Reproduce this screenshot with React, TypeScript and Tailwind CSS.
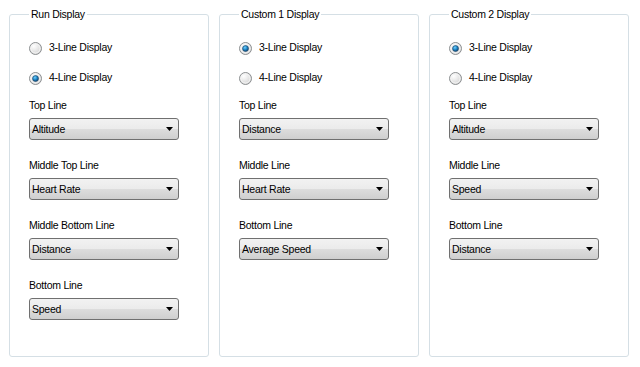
import React from "react";

type Panel = {
  title: string;
  fourLine: boolean;
  fields: { label: string; value: string }[];
};

const panels: Panel[] = [
  {
    title: "Run Display",
    fourLine: true,
    fields: [
      { label: "Top Line", value: "Altitude" },
      { label: "Middle Top Line", value: "Heart Rate" },
      { label: "Middle Bottom Line", value: "Distance" },
      { label: "Bottom Line", value: "Speed" }
    ]
  },
  {
    title: "Custom 1 Display",
    fourLine: false,
    fields: [
      { label: "Top Line", value: "Distance" },
      { label: "Middle Line", value: "Heart Rate" },
      { label: "Bottom Line", value: "Average Speed" }
    ]
  },
  {
    title: "Custom 2 Display",
    fourLine: false,
    fields: [
      { label: "Top Line", value: "Altitude" },
      { label: "Middle Line", value: "Speed" },
      { label: "Bottom Line", value: "Distance" }
    ]
  }
];

function Radio({ checked }: { checked: boolean }) {
  return (
    <svg width="13" height="13" viewBox="0 0 13 13" className="shrink-0">
      <defs>
        <radialGradient id="rface" cx="0.35" cy="0.3" r="0.8">
          <stop offset="0" stopColor="#ffffff" />
          <stop offset="1" stopColor="#d0d0d0" />
        </radialGradient>
        <radialGradient id="rdot" cx="0.4" cy="0.35" r="0.7">
          <stop offset="0" stopColor="#6fd0ff" />
          <stop offset="0.55" stopColor="#1a7fc0" />
          <stop offset="1" stopColor="#0b3c66" />
        </radialGradient>
      </defs>
      <circle cx="6.5" cy="6.5" r="6" fill="url(#rface)" stroke="#8c8f91" strokeWidth="1" />
      <circle cx="6.5" cy="6.5" r="4.5" fill="none" stroke="#f4f4f4" strokeWidth="1" />
      {checked ? <circle cx="6.5" cy="6.5" r="3" fill="url(#rdot)" stroke="#234a6a" strokeWidth="0.6" /> : null}
    </svg>
  );
}

function Combo({ value }: { value: string }) {
  return (
    <div className="flex h-[22px] w-[150px] items-center justify-between rounded-[3px] border border-[#707070] bg-[linear-gradient(to_bottom,#f2f2f2_0%,#ebebeb_50%,#dddddd_50%,#cfcfcf_100%)] pl-[2px] pr-[5px]">
      <span className="leading-none">{value}</span>
      <svg width="7" height="4" viewBox="0 0 7 4">
        <path d="M0 0H7L3.5 4Z" fill="#000" />
      </svg>
    </div>
  );
}

function DisplayPanel({ panel }: { panel: Panel }) {
  return (
    <fieldset className="h-[349px] w-[200px] rounded-[3px] border border-[#d5dfe5] px-[19px]">
      <legend className="ml-0 px-[2px] leading-[13px]">{panel.title}</legend>
      <div className="flex flex-col">
        <label className="mt-[19px] flex h-[16px] items-center gap-[7px]">
          <Radio checked={!panel.fourLine} />
          <span>3-Line Display</span>
        </label>
        <label className="mt-[14px] flex h-[16px] items-center gap-[7px]">
          <Radio checked={panel.fourLine} />
          <span>4-Line Display</span>
        </label>
        <div className="mt-[12px] flex flex-col gap-[18px]">
          {panel.fields.map((f) => (
            <div key={f.label} className="flex flex-col gap-[6px]">
              <span className="leading-[14px]">{f.label}</span>
              <Combo value={f.value} />
            </div>
          ))}
        </div>
      </div>
    </fieldset>
  );
}

export default function App() {
  return (
    <div className="h-[367px] w-[640px] bg-white font-['Liberation_Sans',Arial,sans-serif] text-[10.5px] tracking-[-0.25px] text-black">
      <div className="flex gap-[10px] pl-[9px] pt-[8px]">
        {panels.map((p) => (
          <DisplayPanel key={p.title} panel={p} />
        ))}
      </div>
    </div>
  );
}
